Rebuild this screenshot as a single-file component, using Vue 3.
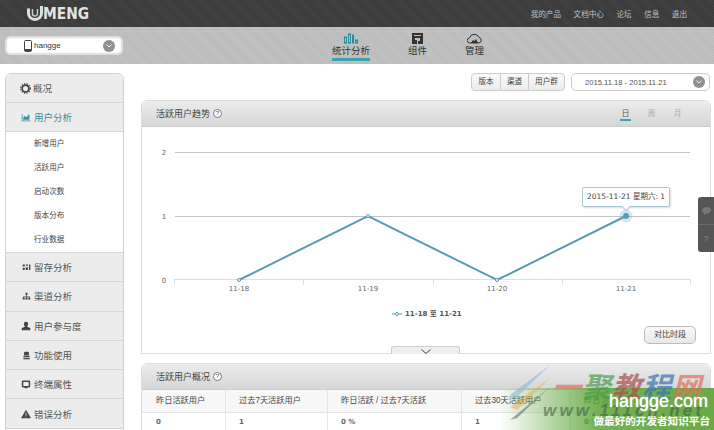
<script setup>
const topLinks = ['我的产品', '文档中心', '论坛', '信息', '退出']
const subItems = ['新增用户', '活跃用户', '启动次数', '版本分布', '行业数据']
const lower = [
  { t: '留存分析', s: 9, d: 'M1 2h3v3H1zM5.500 2h3v2h-3zM10 2h2v8h-2zM1 7h3v3H1zM5.500 6h3v4h-3z' },
  { t: '渠道分析', s: 9, d: 'M5 1h3v3H5zM6 4h1v2h4v2h-1V7H7v1H6V7H3v1H2V6h4zM1 8h3v3H1zM5 8h3v3H5zM9 8h3v3H9z' },
  { t: '用户参与度', s: 10, d: 'M6.500 1a2.700 2.700 0 0 1 2.700 3c0 1.500-1 2.500-1.200 3.400L12 9v3H1V9l4-1.600C4.800 6.500 3.800 5.500 3.800 4a2.700 2.700 0 0 1 2.700-3z' },
  { t: '功能使用', s: 9, d: 'M4 1h5l1 1v4H3V2zM2 7h9v2H2zM2 10h9v2H2z' },
  { t: '终端属性', s: 10, d: 'M2.500 2h8A1.500 1.500 0 0 1 12 3.500v6a1.500 1.500 0 0 1-1.500 1.500H8l.5 1h-4l.5-1H2.500A1.500 1.500 0 0 1 1 9.500v-6A1.500 1.500 0 0 1 2.500 2zM3 4v5h7V4z' },
  { t: '错误分析', s: 10, d: 'M6.500 1L13 12H0zM6 5v4h1V5zM6 9.800v1h1v-1z' }
]
const heads = ['昨日活跃用户', '过去7天活跃用户', '昨日活跃 / 过去7天活跃', '过去30天活跃用户', '昨日活跃']
const vals = ['0', '1', '0 %', '1', '0 %']
const points = [[97, 153], [226, 89], [355, 153], [484, 89]]
const polyline = points.map(p => p.join(',')).join(' ')
const ticks = [32, 161, 291, 420, 548]
const xLabels = [[97, '11-18'], [226, '11-19'], [355, '11-20'], [484, '11-21']]
const grid = [[25, '2'], [89, '1'], [153, '0']]
</script>

<template>
  <div class="page">
    <header class="top">
      <div class="logo">
        <svg width="16" height="15" viewBox="0 0 16 15" fill="none"><path d="M1.500 2.500v5a6.500 6 0 0 0 13 0V0" stroke="#dedede" stroke-width="3"/><path d="M5.500 3v4.500a2.500 2.500 0 0 0 5 0V3" stroke="#c8c8c8" stroke-width="1.500"/></svg>
        <span>MENG</span>
      </div>
      <nav class="top-links"><a v-for="l in topLinks" :key="l">{{ l }}</a></nav>
    </header>

    <div class="subbar">
      <div class="app-select">
        <svg width="8" height="12" viewBox="0 0 8 12"><rect x="0.500" y="0.500" width="7" height="11" rx="1" fill="#fff" stroke="#444"/><rect x="1" y="9" width="6" height="2" fill="#444"/></svg>
        <span class="app-name">hangge</span>
        <i class="round-arrow"><svg width="6" height="4" viewBox="0 0 6 4"><path d="M.5.500L3 3 5.500.500" fill="none" stroke="#eee"/></svg></i>
      </div>
      <div class="tabs">
        <div class="tab active">
          <svg width="14" height="10" viewBox="0 0 14 10"><g fill="none" stroke="#2b8a96"><rect x="0.500" y="3.500" width="2" height="6"/><rect x="4.500" y="0.500" width="2" height="9" /><rect x="8.500" y="1.500" width="1" height="8"/><rect x="11.500" y="6.500" width="2" height="3"/></g></svg>
          <span>统计分析</span>
        </div>
        <div class="tab">
          <svg width="11" height="11" viewBox="0 0 11 11"><path d="M0 0h11v11H6V8h2V5H3v2h2v4H0zM2 2v1h7V2z" fill="#333"/></svg>
          <span>组件</span>
        </div>
        <div class="tab">
          <svg width="15" height="11" viewBox="0 0 15 11"><path d="M3 10a2.500 2.500 0 0 1-.500-5A5 5 0 0 1 12 4.500 2.800 2.800 0 0 1 12 10z" fill="none" stroke="#333"/><path d="M4 10l2-3 1.500 1L9 6l2 4z" fill="#333"/></svg>
          <span>管理</span>
        </div>
      </div>
    </div>

    <div class="body">
      <aside class="side">
        <div class="menu-row first">
          <svg class="gear" width="11" height="11" viewBox="0 0 13 13"><circle cx="6.500" cy="6.500" r="4" fill="none" stroke="#444" stroke-width="2"/><circle cx="6.500" cy="6.500" r="5.600" fill="none" stroke="#444" stroke-width="1.500" stroke-dasharray="1.500 1.500"/></svg>
          <span class="tight">概况</span>
        </div>
        <div class="menu-row current">
          <span class="ico"><svg width="10" height="10" viewBox="0 0 13 13"><path d="M1 3v9h11v-1H2V3z" fill="#3b93a0"/><path d="M3 10V7l2-2 2 2 3-4 1 1v6z" fill="#3b93a0"/></svg></span>
          <span>用户分析</span>
        </div>
        <ul class="sub">
          <li v-for="s in subItems" :key="s">{{ s }}</li>
        </ul>
        <div v-for="m in lower" :key="m.t" class="menu-row">
          <span class="ico"><svg :width="m.s" :height="m.s" viewBox="0 0 13 13"><path :d="m.d" fill="#444" fill-rule="evenodd"/></svg></span>
          <span>{{ m.t }}</span>
        </div>
      </aside>

      <main class="main">
        <div class="toolbar">
          <div class="btn-group"><span class="w1">版本</span><span class="w1">渠道</span><span class="w2">用户群</span></div>
          <div class="date">
            <span>2015.11.18 - 2015.11.21</span>
            <i class="round-arrow small"><svg width="6" height="4" viewBox="0 0 6 4"><path d="M.5.500L3 3 5.500.500" fill="none" stroke="#eee"/></svg></i>
          </div>
        </div>

        <section class="panel chart-panel">
          <div class="panel-head">
            <span class="panel-title">活跃用户趋势</span><i class="help">?</i>
            <div class="ranges"><span class="on">日</span><span>周</span><span>月</span></div>
          </div>
          <div class="chart">
            <svg class="plot" width="568" height="226" viewBox="0 0 568 226">
              <line v-for="g in grid.slice(0, 2)" :key="g[0]" x1="33" x2="548" :y1="g[0] + 0.5" :y2="g[0] + 0.5" stroke="#c4c4c4"/>
              <path d="M32.500 152.500H549" stroke="#d5e0ea" fill="none"/>
              <line v-for="t in ticks" :key="t" :x1="t + 0.5" :x2="t + 0.5" y1="152" y2="158" stroke="#d5e0ea"/>
              <text v-for="g in grid" :key="'y' + g[1]" x="22" :y="g[0] + 3" class="axis" text-anchor="middle">{{ g[1] }}</text>
              <text v-for="x in xLabels" :key="x[1]" :x="x[0]" y="164" class="axis" text-anchor="middle">{{ x[1] }}</text>
              <polyline :points="polyline" fill="none" stroke="#5a9ab5" stroke-width="2"/>
              <circle v-for="p in points.slice(0, 3)" :key="p[0]" :cx="p[0]" :cy="p[1]" r="1.500" fill="#fff" stroke="#5a9ab5"/>
              <circle cx="484" cy="89" r="6.500" fill="#5a9ab5" opacity=".25"/>
              <circle cx="484" cy="89" r="3" fill="#5a9ab5"/>
              <line x1="250" x2="260" y1="187" y2="187" stroke="#5a9ab5"/>
              <circle cx="255" cy="187" r="1.500" fill="#fff" stroke="#5a9ab5"/>
            </svg>
            <div class="tip">2015-11-21 星期六: 1</div>
            <div class="legend">11-18 至 11-21</div>
            <div class="compare">对比时段</div>
            <div class="expand"><svg width="10" height="5" viewBox="0 0 10 5"><path d="M.5.500L5 4.500 9.500.500" fill="none" stroke="#444"/></svg></div>
          </div>
        </section>

        <section class="panel table-panel">
          <div class="panel-head">
            <span class="panel-title">活跃用户概况</span><i class="help">?</i>
          </div>
          <div class="table">
            <div v-for="h in heads" :key="h" class="th">{{ h }}</div>
            <div v-for="(v, i) in vals" :key="i" class="td">{{ v }}</div>
          </div>
        </section>
      </main>
    </div>

    <div class="float-tools">
      <div><svg width="9" height="8" viewBox="0 0 9 8"><path d="M4.500 0C7 0 9 1.400 9 3.300S7 6.500 4.500 6.500L2 8V6C.800 5.500 0 4.500 0 3.300 0 1.400 2 0 4.500 0z" fill="#777"/></svg></div>
      <div class="q">?</div>
    </div>

    <div class="watermark">
      <div class="wm-green"></div>
      <svg class="wm-stripes" width="42" height="55" viewBox="0 0 42 55">
        <path d="M2 30L42 0 8 33z" fill="#8db6dc" opacity=".6"/>
        <path d="M2 42L42 13 9 45z" fill="#eaa64a" opacity=".5"/>
        <path d="M2 55L42 22 9 53z" fill="#777" opacity=".65"/>
      </svg>
      <div class="wm-cn"><span class="c1">一</span><span class="c2">聚</span><span class="c3">教</span><span class="c4">程</span><span class="c1">网</span></div>
      <div class="wm-url">www.111cn.net</div>
      <div class="wm-host">hangge.com</div>
      <div class="wm-slogan">做最好的开发者知识平台</div>
    </div>
  </div>
</template>

<style>
html, body { margin: 0; background: #fff; overflow: hidden; }
</style>

<style scoped>
.page {
  position: relative;
  width: 714px;
  height: 430px;
  overflow: hidden;
  font-family: "Liberation Sans", "Noto Sans CJK SC", sans-serif;
  color: #444;
  background: #fff;
}
.top {
  height: 27px;
  background: #3d3d3d repeating-linear-gradient(45deg, #3a3a3a 0 1px, #424242 1px 2px);
  display: flex;
  align-items: center;
  justify-content: space-between;
  padding: 0 27px;
}
.logo { display: flex; align-items: center; color: #e4e4e4; font: 900 15px/16px "DejaVu Sans", sans-serif; }
.logo span { display: block; width: 46px; transform: scaleX(.92); transform-origin: left; }
.top-links { display: flex; gap: 12.500px; font-size: 7.600px; color: #c0c0c0; }
.subbar {
  height: 37px;
  background: #bebebe repeating-linear-gradient(45deg, #bbb 0 1px, #c2c2c2 1px 2px);
  position: relative;
  display: flex;
  align-items: center;
  padding-left: 5px;
}
.app-select {
  width: 118px;
  height: 19px;
  box-sizing: border-box;
  border: 1px solid #ddd;
  border-radius: 5px;
  background: #fff;
  box-shadow: 0 0 2px #999 inset;
  display: flex;
  align-items: center;
  padding: 0 7px 0 18px;
}
.app-name { font-size: 8px; margin-left: 2px; flex: 1; color: #333; }
.round-arrow {
  width: 12px;
  height: 12px;
  border-radius: 50%;
  background: #909090;
  display: flex;
  align-items: center;
  justify-content: center;
}
.tabs { position: absolute; left: 332px; top: 4px; display: flex; gap: 38px; }
.tab { display: flex; flex-direction: column; align-items: center; font-size: 9.500px; line-height: 13px; color: #333; height: 30px; padding-top: 2px; box-sizing: border-box; }
.tab svg { height: 11px; }
.tab.active { border-bottom: 3px solid #35a5ae; }
.body { display: flex; padding: 9px 3px 0 5px; gap: 17px; }
.side {
  width: 119px;
  box-sizing: border-box;
  flex: none;
  border: 1px solid #d0d0d0;
  border-radius: 6px 6px 0 0;
  overflow: hidden;
  height: 400px;
  align-self: flex-start;
}
.menu-row {
  height: 28.300px;
  background: #ececec;
  border-bottom: 1px solid #d6d6d6;
  display: flex;
  align-items: center;
  padding-left: 15px;
  gap: 3px;
  font-size: 9.500px;
  color: #555;
}
.ico { width: 10px; height: 10px; display: flex; align-items: center; justify-content: center; }
.menu-row.first, .menu-row.current { height: 28px; }
.gear { margin-left: -1px; }
.menu-row .tight { margin-left: -1px; }
.menu-row.current { color: #3a8d99; }
.sub { list-style: none; margin: 0; padding: 0; background: #fff; border-bottom: 1px solid #d6d6d6; }
.sub li { height: 24px; line-height: 24px; font-size: 7.600px; padding-left: 28px; color: #444; }
.main { width: 570px; flex: none; }
.toolbar { display: flex; justify-content: flex-end; gap: 6px; height: 18px; margin-bottom: 9px; padding-right: 1px; }
.btn-group { display: flex; border: 1px solid #ccc; border-radius: 4px; font-size: 7.600px; background: linear-gradient(#fafafa, #ececec); color: #444; }
.btn-group span { line-height: 16px; text-align: center; border-left: 1px solid #ccc; box-sizing: border-box; }
.btn-group .w1 { width: 28px; }
.btn-group .w2 { width: 36px; }
.btn-group span:first-child { border-left: 0; }
.date {
  width: 139px;
  border: 1px solid #ccc;
  border-radius: 5px;
  display: flex;
  align-items: center;
  justify-content: space-between;
  padding: 0 4px 0 13px;
  box-sizing: border-box;
  font-size: 7.600px;
  color: #555;
}
.round-arrow.small { width: 12px; height: 12px; }
.panel { border: 1px solid #ddd; border-radius: 6px 6px 0 0; width: 570px; box-sizing: border-box; }
.panel-head {
  height: 25px;
  background: linear-gradient(#ececec, #d6d6d6);
  border-bottom: 1px solid #ccc;
  border-radius: 6px 6px 0 0;
  display: flex;
  align-items: center;
  padding-left: 14px;
  font-size: 9px;
  color: #444;
}
.help {
  width: 7px;
  height: 7px;
  border: 1px solid #777;
  border-radius: 50%;
  font: normal 6px/7px "Liberation Sans", sans-serif;
  text-align: center;
  margin-left: 3px;
  background: #fff;
  color: #555;
}
.ranges { margin-left: auto; margin-right: 27px; display: flex; gap: 15px; font-size: 7.600px; color: #aaa; }
.ranges span { width: 11px; height: 14px; box-sizing: border-box; text-align: center; padding-top: 1px; line-height: 11px; }
.ranges .on { color: #555; border-bottom: 2px solid #35a5ae; }
.chart { position: relative; height: 226px; }
.plot { display: block; }
.axis { font: 7px "DejaVu Sans", sans-serif; fill: #666; }
.tip {
  position: absolute;
  left: 440px;
  top: 60px;
  width: 88px;
  height: 20px;
  box-sizing: border-box;
  border: 1px solid #a9c6d4;
  border-radius: 2px;
  background: #fff;
  font: 7.500px/18px "DejaVu Sans", "Noto Sans CJK SC", sans-serif;
  text-align: center;
  color: #444;
  box-shadow: 1px 1px 2px #ddd;
}
.tip::after {
  content: "";
  position: absolute;
  left: 40px;
  bottom: -4px;
  width: 5px;
  height: 5px;
  background: #fff;
  border-right: 1px solid #a9c6d4;
  border-bottom: 1px solid #a9c6d4;
  transform: rotate(45deg);
}
.legend {
  position: absolute;
  left: 263px;
  top: 182px;
  font: bold 7px/10px "DejaVu Sans", "Noto Sans CJK SC", sans-serif;
  color: #555;
}
.compare {
  position: absolute;
  right: 14px;
  top: 199px;
  width: 52px;
  height: 18px;
  box-sizing: border-box;
  border: 1px solid #bbb;
  border-radius: 5px;
  background: linear-gradient(#fafafa, #e8e8e8);
  text-align: center;
  font-size: 8px;
  line-height: 16px;
}
.expand {
  position: absolute;
  left: 249px;
  bottom: -1px;
  width: 69px;
  height: 8px;
  border: 1px solid #ccc;
  border-bottom: 0;
  border-radius: 3px 3px 0 0;
  background: #eee;
  display: flex;
  justify-content: center;
  padding-top: 2px;
  box-sizing: border-box;
}
.table-panel { margin-top: 9px; height: 70px; overflow: hidden; }
.table { display: grid; grid-template-columns: 83px 102px 134px 109px 1fr; }
.th {
  height: 23px;
  line-height: 22px;
  background: #f7f7f7;
  border-bottom: 1px solid #e3e3e3;
  border-left: 1px solid #e6e6e6;
  padding-left: 13px;
  font-size: 8.200px;
  box-sizing: border-box;
  color: #444;
  white-space: nowrap;
}
.th:first-child, .td:nth-child(6) { border-left: 0; padding-left: 14px; }
.td {
  height: 22px;
  border-left: 1px solid #e6e6e6;
  padding-left: 13px;
  font: bold 7px/18px "DejaVu Sans", sans-serif;
  box-sizing: border-box;
  color: #667;
}
.float-tools {
  position: absolute;
  left: 698px;
  top: 197px;
  width: 16px;
  height: 55px;
  background: #555;
  border-radius: 3px 0 0 3px;
  display: flex;
  flex-direction: column;
}
.float-tools div { flex: 1; display: flex; align-items: center; justify-content: center; }
.float-tools .q { border-top: 1px solid #6a6a6a; color: #888; font: 9px "Liberation Sans", sans-serif; }
.watermark { position: absolute; left: 500px; top: 360px; width: 214px; height: 70px; pointer-events: none; }
.wm-green { position: absolute; left: 0; top: 28px; right: 0; bottom: 0; background: linear-gradient(90deg, rgba(92,165,55,0), rgba(92,165,55,.85) 46%, rgba(92,165,55,.92)); }
.wm-stripes { position: absolute; left: 8px; top: 5px; }
.wm-cn { position: absolute; left: 52px; top: 8px; font: italic bold 29px/34px "Noto Sans CJK SC", sans-serif; white-space: nowrap; letter-spacing: 1px; opacity: .7; }
.c1 { color: #e0705c; }
.c2 { color: #4f9d4a; }
.c3 { color: #a94f4f; }
.c4 { color: #3b73b0; }
.wm-url { position: absolute; left: 43px; top: 42px; font: italic bold 17px/18px "Liberation Sans", sans-serif; letter-spacing: 3.200px; color: #3f553f; opacity: .55; white-space: nowrap; }
.wm-host { position: absolute; right: 6px; top: 29px; font: normal 18px/24px "Liberation Sans", sans-serif; color: #fff; text-shadow: 0 0 1px #fff; }
.wm-slogan { position: absolute; right: 4px; top: 52px; font: bold 10.600px/17px "Noto Sans CJK SC", sans-serif; color: #fff; white-space: nowrap; }
</style>
